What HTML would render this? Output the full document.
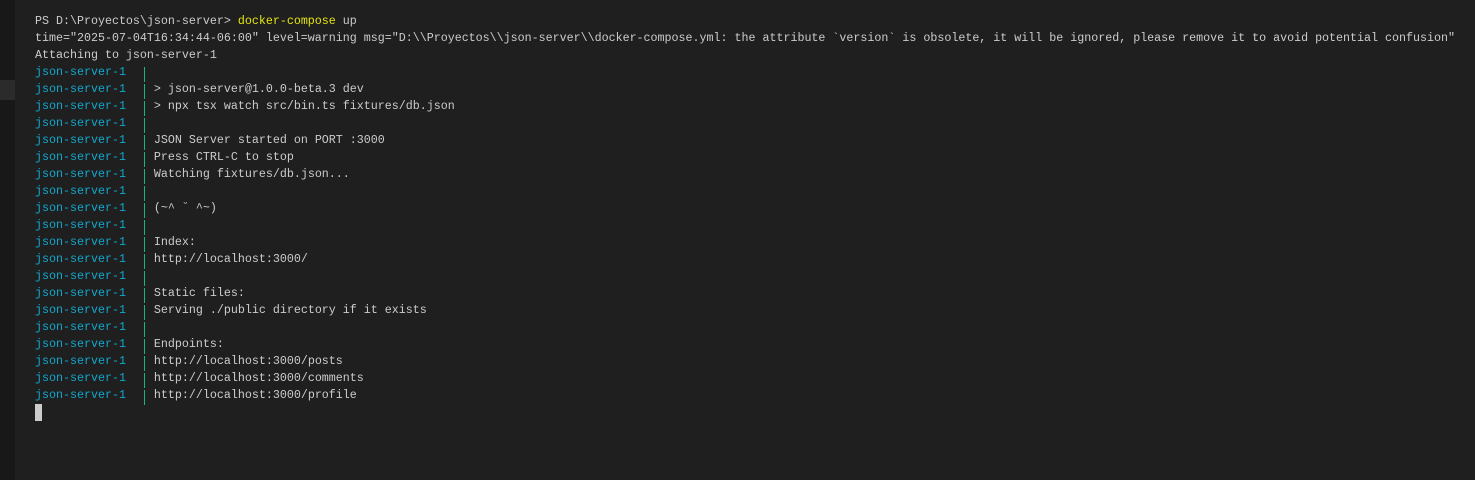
<!DOCTYPE html>
<html><head><style>
html,body{margin:0;padding:0;width:1475px;height:480px;overflow:hidden;background:#1f1f1f;}
.side{position:absolute;left:0;top:0;width:15px;height:480px;background:#181818;}
.hl{position:absolute;left:0;top:80px;width:15px;height:20px;background:#2b2b2b;}
pre{position:absolute;left:35px;top:13px;margin:0;font-family:"Liberation Mono",monospace;font-size:11.67px;line-height:17px;color:#cccccc;white-space:pre;}
.c{color:#11a8cd}.y{color:#e5e510}
.g{display:inline-block;width:7px;height:14px;vertical-align:-3px;position:relative;color:transparent;}
.g::before{content:"";position:absolute;left:4px;top:0;width:1px;height:15px;background:#0dbc79;}
.cur{position:absolute;left:35px;top:404px;width:7px;height:17px;background:#cccccc;}
</style></head><body>
<div class="side"></div><div class="hl"></div>
<pre>PS D:\Proyectos\json-server&gt; <span class="y">docker-compose</span> up
time="2025-07-04T16:34:44-06:00" level=warning msg="D:\\Proyectos\\json-server\\docker-compose.yml: the attribute `version` is obsolete, it will be ignored, please remove it to avoid potential confusion"
Attaching to json-server-1
<span class="c">json-server-1</span>  <span class="g">|</span>
<span class="c">json-server-1</span>  <span class="g">|</span> &gt; json-server@1.0.0-beta.3 dev
<span class="c">json-server-1</span>  <span class="g">|</span> &gt; npx tsx watch src/bin.ts fixtures/db.json
<span class="c">json-server-1</span>  <span class="g">|</span>
<span class="c">json-server-1</span>  <span class="g">|</span> JSON Server started on PORT :3000
<span class="c">json-server-1</span>  <span class="g">|</span> Press CTRL-C to stop
<span class="c">json-server-1</span>  <span class="g">|</span> Watching fixtures/db.json...
<span class="c">json-server-1</span>  <span class="g">|</span>
<span class="c">json-server-1</span>  <span class="g">|</span> (~^ ˘ ^~)
<span class="c">json-server-1</span>  <span class="g">|</span>
<span class="c">json-server-1</span>  <span class="g">|</span> Index:
<span class="c">json-server-1</span>  <span class="g">|</span> http://localhost:3000/
<span class="c">json-server-1</span>  <span class="g">|</span>
<span class="c">json-server-1</span>  <span class="g">|</span> Static files:
<span class="c">json-server-1</span>  <span class="g">|</span> Serving ./public directory if it exists
<span class="c">json-server-1</span>  <span class="g">|</span>
<span class="c">json-server-1</span>  <span class="g">|</span> Endpoints:
<span class="c">json-server-1</span>  <span class="g">|</span> http://localhost:3000/posts
<span class="c">json-server-1</span>  <span class="g">|</span> http://localhost:3000/comments
<span class="c">json-server-1</span>  <span class="g">|</span> http://localhost:3000/profile</pre>
<div class="cur"></div>
</body></html>
